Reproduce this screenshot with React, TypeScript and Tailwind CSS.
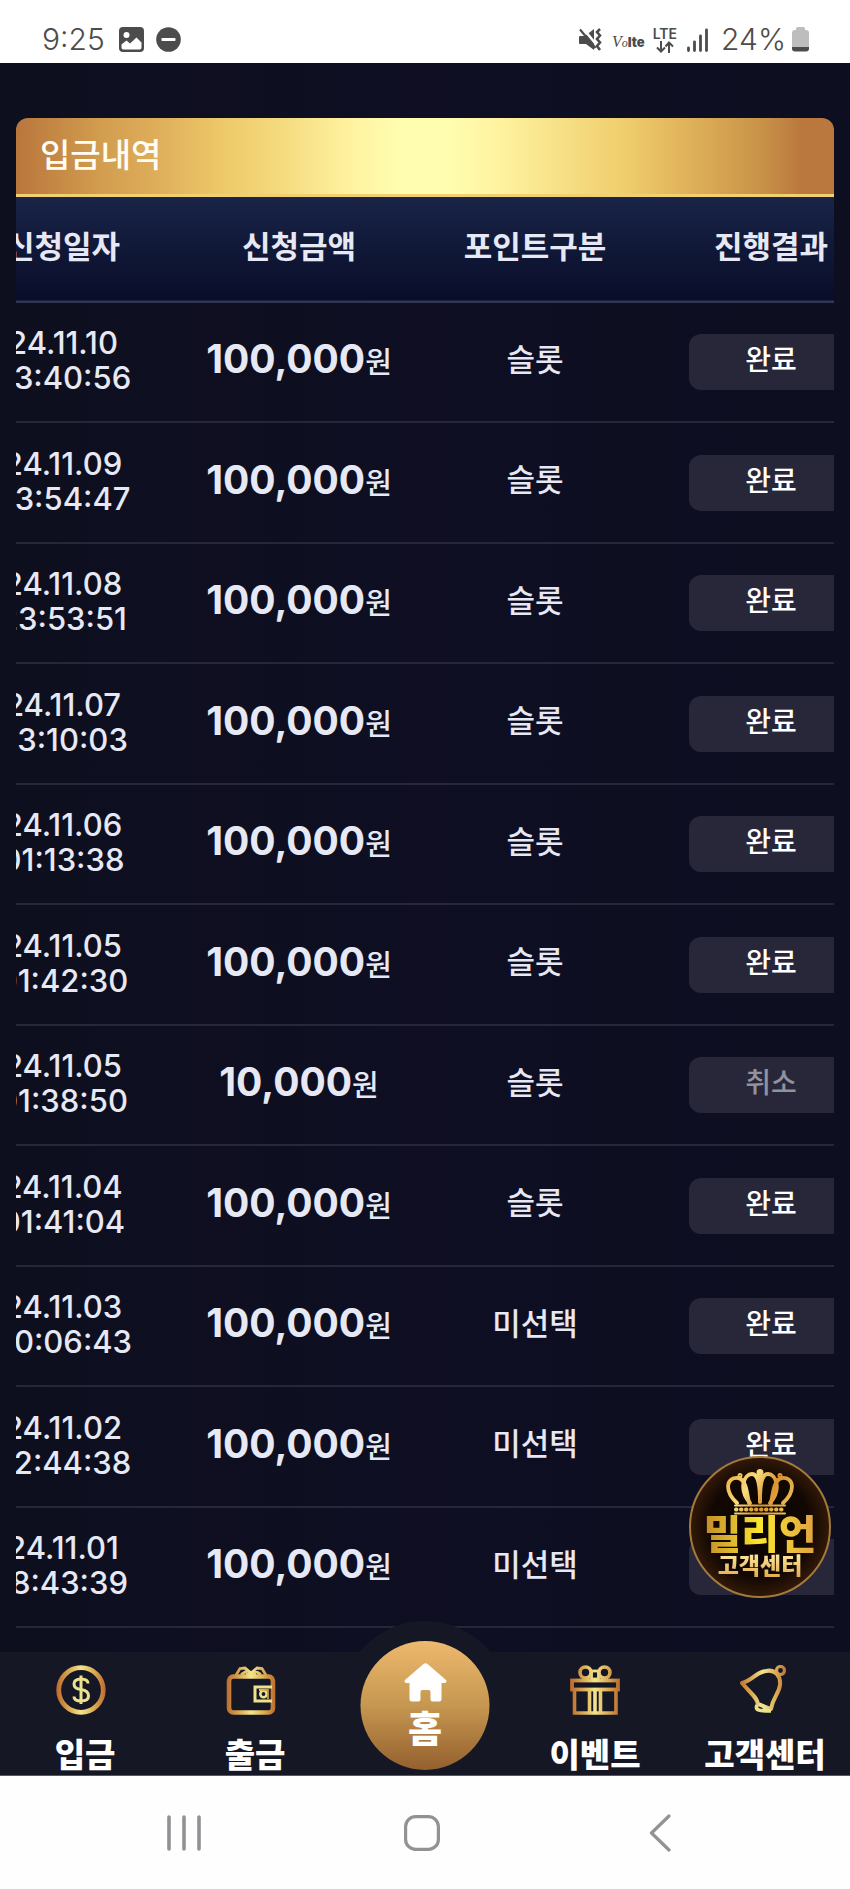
import { useLayoutEffect, useRef, type ReactNode } from "react";

type Deposit = { date: string; time: string; amount: string; kind: string; status: "완료" | "취소" };

const deposits: Deposit[] = [
  { date: "24.11.10", time: "23:40:56", amount: "100,000", kind: "슬롯", status: "완료" },
  { date: "24.11.09", time: "23:54:47", amount: "100,000", kind: "슬롯", status: "완료" },
  { date: "24.11.08", time: "23:53:51", amount: "100,000", kind: "슬롯", status: "완료" },
  { date: "24.11.07", time: "23:10:03", amount: "100,000", kind: "슬롯", status: "완료" },
  { date: "24.11.06", time: "01:13:38", amount: "100,000", kind: "슬롯", status: "완료" },
  { date: "24.11.05", time: "01:42:30", amount: "100,000", kind: "슬롯", status: "완료" },
  { date: "24.11.05", time: "01:38:50", amount: "10,000", kind: "슬롯", status: "취소" },
  { date: "24.11.04", time: "01:41:04", amount: "100,000", kind: "슬롯", status: "완료" },
  { date: "24.11.03", time: "00:06:43", amount: "100,000", kind: "미선택", status: "완료" },
  { date: "24.11.02", time: "22:44:38", amount: "100,000", kind: "미선택", status: "완료" },
  { date: "24.11.01", time: "18:43:39", amount: "100,000", kind: "미선택", status: "완료" },
];

const columns = ["신청일자", "신청금액", "포인트구분", "진행결과"];

function StatusBar() {
  return (
    <header className="flex h-[63px] items-center justify-between bg-white pt-4 pr-[41px] pl-[42px] text-[30px] text-[#4c4c4c]">
      <div className="flex items-center">
        <span className="w-[77px] font-light">9:25</span>
        <svg width="25" height="25" viewBox="0 0 25 25" aria-hidden="true">
          <rect width="25" height="25" rx="4" fill="#4c4c4c" />
          <circle cx="7.5" cy="8" r="3" fill="#fff" />
          <path d="M2.5 17.5 L7.5 13.5 L11 16.5 L17.5 10.5 L22.5 15.5 V20.5 Q22.5 22.5 20.5 22.5 H4.500 Q2.500 22.500 2.500 20.500 Z" fill="#fff" />
        </svg>
        <svg className="ml-3" width="25" height="25" viewBox="0 0 25 25" aria-hidden="true">
          <circle cx="12.500" cy="12.500" r="12.300" fill="#4c4c4c" />
          <rect x="5.500" y="11" width="14" height="3" rx="0.800" fill="#fff" />
        </svg>
      </div>
      <div className="flex items-center">
        <svg width="24" height="24" viewBox="0 0 24 24" fill="none" aria-hidden="true">
          <path d="M2 8 H7 L16 1 V22 L8 16 H2 Q1 16 1 15 V9 Q1 8 2 8 Z" fill="#4c4c4c" />
          <path d="M4 -1 L21 20" stroke="#fff" strokeWidth="2.500" />
          <path d="M2 1.500 L17.500 20" stroke="#4c4c4c" strokeWidth="2.200" />
          <path d="M22 1 L19 4 L22 7.500 L19 11 L22 14.500 L19 18 L22 22" stroke="#4c4c4c" strokeWidth="2.600" />
        </svg>
        <span className="ml-[10px] flex items-baseline pt-1 leading-none">
          <i className="font-['Liberation_Serif',serif] text-[16px]">V</i>
          <i className="font-['Liberation_Serif',serif] text-[12px]">o</i>
          <b className="text-[13px] font-black">lte</b>
        </span>
        <span className="ml-2 flex flex-col items-center">
          <span className="text-[14px] leading-[14px] font-semibold">LTE</span>
          <svg width="20" height="12" viewBox="0 0 20 12" fill="none" stroke="#4c4c4c" strokeWidth="2" aria-hidden="true">
            <path d="M6 0 V10 M2 6.500 L6 10.500 L10 6.500 M14 12 V2 M10.500 5.500 L14 1.500 L18 5.500" />
          </svg>
        </span>
        <svg className="ml-[10px]" width="22" height="24" viewBox="0 0 22 24" stroke="#4c4c4c" strokeWidth="2.800" strokeLinecap="round" aria-hidden="true">
          <path d="M1.500 20 V22.500 M7.500 14 V22.500 M13.500 8 V22.500 M19.500 2 V22.500" />
        </svg>
        <span className="ml-3 font-light">24%</span>
        <svg className="ml-[6px]" width="17" height="25" viewBox="0 0 17 25" aria-hidden="true">
          <path d="M4 3 V1.500 Q4 0 5.500 0 H11.500 Q13 0 13 1.500 V3 H14 Q17 3 17 6 V20 H0 V6 Q0 3 3 3 Z" fill="#bdbdbd" />
          <path d="M0 20 H17 V21.500 Q17 24.500 14 24.500 H3 Q0 24.500 0 21.500 Z" fill="#4c4c4c" />
        </svg>
      </div>
    </header>
  );
}

function DepositTable() {
  const scroller = useRef<HTMLDivElement>(null);

  // The list opens scrolled toward the result column.
  useLayoutEffect(() => {
    if (scroller.current) scroller.current.scrollLeft = 71;
  }, []);

  return (
    <div ref={scroller} className="overflow-x-auto [scrollbar-width:none]">
      <table className="w-full min-w-[944px] table-fixed border-collapse text-center text-[#e6e8f4]">
        <thead>
          <tr className="h-[105px] border-b-2 border-[#34374c] bg-linear-to-b from-[#192447] to-[#090d29]">
            {columns.map((name) => (
              <th key={name} scope="col" className="pb-1 text-[31px] font-bold">
                {name}
              </th>
            ))}
          </tr>
        </thead>
        <tbody>
          {deposits.map((row) => (
            <tr key={row.date + row.time} className="border-b-2 border-[#27273a] odd:h-[120px] even:h-[121px]">
              <td className="pb-1 text-[31px] leading-[35px] font-medium">
                {row.date}
                <br />
                {row.time}
              </td>
              <td className="pb-1 whitespace-nowrap">
                <span className="text-[39px] leading-[48px] font-bold">{row.amount}</span>
                <span className="text-[29px] font-medium">원</span>
              </td>
              <td className="pb-1 text-[31px] font-medium">{row.kind}</td>
              <td className="px-9">
                <button
                  type="button"
                  className={`block h-14 w-full rounded-xl bg-[#282739] pb-1 text-[28px] leading-none font-medium ${
                    row.status === "취소" ? "text-[#92929e]" : "text-white"
                  }`}
                >
                  {row.status}
                </button>
              </td>
            </tr>
          ))}
        </tbody>
      </table>
    </div>
  );
}

function GoldIcon({ id, children }: { id: string; children: ReactNode }) {
  return (
    <svg className="shrink-0" width="58" height="50" viewBox="0 0 58 50" fill="none" stroke={`url(#${id})`} aria-hidden="true">
      <defs>
        <linearGradient id={id} gradientUnits="userSpaceOnUse" x1="0" y1="0" x2="50" y2="0">
          <stop offset="0" stopColor="#b9682c" />
          <stop offset="0.250" stopColor="#d8a550" />
          <stop offset="0.500" stopColor="#f3e58c" />
          <stop offset="0.750" stopColor="#dcae55" />
          <stop offset="1" stopColor="#b9682c" />
        </linearGradient>
      </defs>
      {children}
    </svg>
  );
}

function DepositIcon() {
  return (
    <GoldIcon id="gold-deposit">
      <circle cx="25" cy="25" r="22.300" strokeWidth="4.800" />
      <path d="M32 18.500 C32 15 29 14 25 14 C21 14 18 15.500 18 19 C18 23 21 24 25 24.500 C29 25 32.500 26.500 32.500 31 C32.500 35 29 36 25 36 C21 36 18 35 18 31.500 M25 10.500 V39" stroke="#ece28d" strokeWidth="3" />
    </GoldIcon>
  );
}

function WithdrawIcon() {
  return (
    <GoldIcon id="gold-withdraw">
      <rect x="3" y="11.500" width="44" height="36" rx="4.500" strokeWidth="4.600" />
      <path d="M10 10 L14 3.500 L19 3 L25 8 L31 3 L36 3.500 L40 10 M15 9.500 L21 6 M35 9.500 L29 6 M20 9 H30" strokeWidth="2.800" />
      <path d="M46 22 H29 V36 H46" stroke="#ece28d" strokeWidth="3" />
      <circle cx="37.500" cy="29" r="3.200" stroke="#ece28d" strokeWidth="2.600" />
      <path d="M33 25 H42 V34" strokeWidth="1.800" />
    </GoldIcon>
  );
}

function EventIcon() {
  return (
    <GoldIcon id="gold-event">
      <g transform="translate(4 0)">
        <rect x="2" y="15.500" width="46" height="9" strokeWidth="3.800" />
        <path d="M4.500 25 V48 H46 V25 M19.500 25 V48 M30.500 25 V48 M25 26 V48" strokeWidth="3.600" />
        <circle cx="15.500" cy="7.500" r="5.500" strokeWidth="3.600" />
        <circle cx="34.500" cy="7.500" r="5.500" strokeWidth="3.600" />
        <rect x="21.500" y="6" width="7" height="8" strokeWidth="2.800" />
        <path d="M15 14 L22 10 M35 14 L28 10" strokeWidth="2.800" />
      </g>
    </GoldIcon>
  );
}

function BellIcon() {
  return (
    <GoldIcon id="gold-bell">
      <g transform="translate(2 0)" strokeLinejoin="round">
        <path d="M4 18 C14 16 18 7 28 6 C37 4 43 11 42 20 C41 29 35 32 33 44 L20 39 C18 31 14 30 4 18 Z" strokeWidth="4" />
        <path d="M19 40 C17 45 20 46 33 46" stroke="#ece28d" strokeWidth="3.600" />
        <circle cx="42.500" cy="5.500" r="4" strokeWidth="3.200" />
        <path d="M21 39 L25 41 L28 45" stroke="#ece28d" strokeWidth="3.400" />
      </g>
    </GoldIcon>
  );
}

function Crown() {
  return (
    <svg className="mt-[11px] shrink-0" width="68" height="46" viewBox="0 0 68 46" fill="none" stroke="url(#crown-gold)" strokeLinecap="round" aria-hidden="true">
      <defs>
        <linearGradient id="crown-gold" gradientUnits="userSpaceOnUse" x1="0" y1="0" x2="68" y2="46">
          <stop offset="0" stopColor="#e8a93e" />
          <stop offset="0.350" stopColor="#f8dd7e" />
          <stop offset="0.600" stopColor="#d9942f" />
          <stop offset="1" stopColor="#f0cf6a" />
        </linearGradient>
      </defs>
      <path d="M11 34 C-2 22 0 8 12 9 C20 10 21 24 23 34" strokeWidth="3.800" />
      <path d="M57 34 C70 22 68 8 56 9 C48 10 47 24 45 34" strokeWidth="3.800" />
      <path d="M24 34 C12 20 18 5 26 5 C32 5 34 14 34 34 C34 14 36 5 42 5 C50 5 56 20 44 34" strokeWidth="3.800" />
      <path d="M34 4 V33" strokeWidth="4" />
      <circle cx="34" cy="3.500" r="2" strokeWidth="3" />
      <circle cx="14" cy="6.500" r="1" strokeWidth="3" />
      <circle cx="54" cy="6.500" r="1" strokeWidth="3" />
      <path d="M9 36.500 H59 M9 44.500 H59" strokeWidth="2" />
      <path d="M10 40.500 H58" strokeWidth="4" strokeDasharray="0.500 4.500" />
    </svg>
  );
}

function SupportBadge() {
  return (
    <a
      href="#support"
      className="absolute right-[19px] bottom-full mb-[54px] flex size-[142px] flex-col items-center overflow-hidden rounded-full border-2 border-[#a3793c] bg-[radial-gradient(circle_at_50%_50%,#0a0402_0%,#120803_52%,#4a260c_86%,#8a5a28_100%)]"
    >
      <Crown />
      <span className="bg-linear-to-r from-[#c08a2a] via-[#fbe62c] to-[#e0a040] bg-clip-text text-[41px] leading-[38px] font-black whitespace-nowrap text-transparent">
        밀리언
      </span>
      <span className="bg-linear-to-b from-[#ffe9a0] to-[#e0a848] bg-clip-text text-[23px] leading-[26px] font-black whitespace-nowrap text-transparent">
        고객센터
      </span>
    </a>
  );
}

function NavItem({ label, icon }: { label: string; icon: ReactNode }) {
  return (
    <a href="#menu" className="flex flex-1 flex-col items-center pt-[13px] whitespace-nowrap">
      {icon}
      <span className="mt-5 text-[33px] leading-10 font-black text-white">{label}</span>
    </a>
  );
}

function BottomNav() {
  return (
    <nav className="relative flex h-[124px] border-b border-[#55565e] bg-[#161724]">
      <SupportBadge />
      <NavItem label="입금" icon={<DepositIcon />} />
      <NavItem label="출금" icon={<WithdrawIcon />} />
      <div className="flex-1" />
      <NavItem label="이벤트" icon={<EventIcon />} />
      <NavItem label="고객센터" icon={<BellIcon />} />
      <div className="absolute bottom-[5px] left-1/2 -translate-x-1/2">
        <div className="absolute -top-5 -left-5 size-[169px] rounded-full bg-[#161724] [clip-path:inset(0_0_20px_0)]" />
        <a
          href="#home"
          className="relative flex size-[129px] flex-col items-center rounded-full bg-linear-to-b from-[#edb96e] via-[#c69750] to-[#94602f] pt-[22px] text-white"
        >
          <svg className="shrink-0" width="44" height="39" viewBox="0 0 44 39" fill="#fff" aria-hidden="true">
            <path d="M20 1 Q22 -0.500 24 1 L42.500 17 Q44 19 41.500 20 H38 V36 Q38 38.500 35.500 38.500 H29 Q27 38.500 27 36.500 V29 Q27 27 25 27 H19 Q17 27 17 29 V36.500 Q17 38.500 15 38.500 H8.500 Q6 38.500 6 36 V20 H2.500 Q0 19 1.500 17 Z" />
          </svg>
          <span className="mt-1 text-[37px] leading-[48px] font-black">홈</span>
        </a>
      </div>
    </nav>
  );
}

function SystemNav() {
  return (
    <footer className="flex h-[113px] items-center bg-[#fefefe] pr-[71px] pl-[65px]">
      <button type="button" aria-label="최근 앱" className="flex flex-1 justify-center">
        <svg width="36" height="36" viewBox="0 0 36 36" stroke="#929296" strokeWidth="3.600" strokeLinecap="round">
          <path d="M3 2 V34 M18 2 V34 M33 2 V34" />
        </svg>
      </button>
      <button type="button" aria-label="홈 화면" className="flex flex-1 justify-center">
        <svg width="36" height="36" viewBox="0 0 36 36" fill="none" stroke="#929296" strokeWidth="3.200">
          <rect x="1.600" y="1.600" width="32.800" height="32.800" rx="10" />
        </svg>
      </button>
      <button type="button" aria-label="뒤로" className="flex flex-1 justify-center">
        <svg width="22" height="38" viewBox="0 0 22 38" fill="none" stroke="#929296" strokeWidth="3.200" strokeLinecap="round" strokeLinejoin="round">
          <path d="M20 2 L2.500 19 L20 36" />
        </svg>
      </button>
    </footer>
  );
}

export default function App() {
  return (
    <div
      lang="ko"
      className="flex min-h-screen flex-col bg-[#0e0e20] font-['Inter','Noto_Sans_CJK_KR',sans-serif]"
    >
      <StatusBar />
      <main className="flex-1 bg-linear-to-r from-[#0d0f1e] via-[#0f0e23] to-[#0d0e20] px-4 pt-[55px] pb-6">
        <h1 className="flex h-[79px] items-center rounded-t-xl border-b-3 border-[#f0d070] bg-[linear-gradient(to_right,#b9763c_0%,#d19c4e_10%,#e0b05c_18%,#edc868_25%,#f5dc80_33%,#fff3a0_41%,#fffdb0_47%,#fffdb0_53%,#fff3a0_59%,#f6df85_67%,#f0cf6e_74%,#e0b25a_82%,#c89348_91%,#bb783e_96%,#bb783e_100%)] pl-6 text-[33px] font-medium text-[#fffdf5]">
          입금내역
        </h1>
        <DepositTable />
      </main>
      <BottomNav />
      <SystemNav />
    </div>
  );
}
